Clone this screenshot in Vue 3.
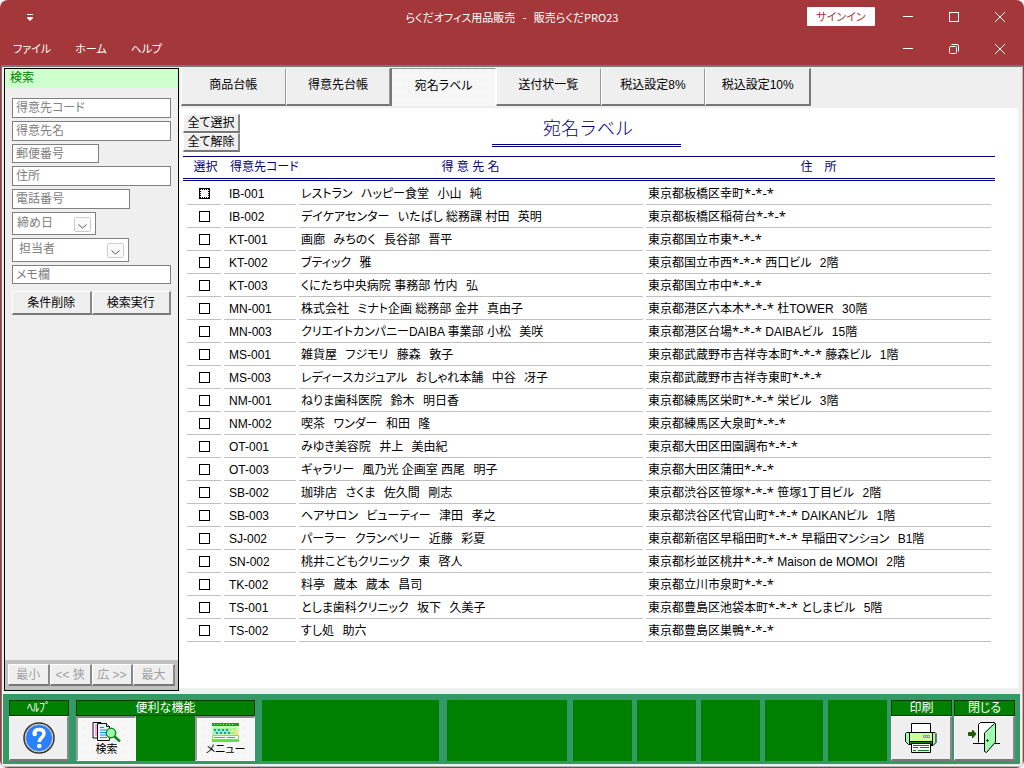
<script setup>
import { reactive, ref } from 'vue'

const menus = ['ファイル', 'ホーム', 'ヘルプ']
const tabs = ['商品台帳', '得意先台帳', '宛名ラベル', '送付状一覧', '税込設定8%', '税込設定10%']
const activeTab = ref(2)

const fields = [
  { label: '得意先コード', type: 'text', size: 'full' },
  { label: '得意先名', type: 'text', size: 'full' },
  { label: '郵便番号', type: 'text', size: 'short' },
  { label: '住所', type: 'text', size: 'full' },
  { label: '電話番号', type: 'text', size: 'medium' },
  { label: '締め日', type: 'select', size: 'day' },
  { label: '担当者', type: 'select', size: 'staff' },
  { label: 'メモ欄', type: 'text', size: 'note' },
]

const widths = ['最小', '<< 狭', '広 >>', '最大']

const customers = reactive([
  ['IB-001', 'レストラン　ハッピー食堂　小山　純', '東京都板橋区幸町', ''],
  ['IB-002', 'デイケアセンター　いたばし 総務課 村田　英明', '東京都板橋区稲荷台', ''],
  ['KT-001', '画廊　みちのく　長谷部　晋平', '東京都国立市東', ''],
  ['KT-002', 'ブティック　雅', '東京都国立市西', '西口ビル　2階'],
  ['KT-003', 'くにたち中央病院 事務部 竹内　弘', '東京都国立市中', ''],
  ['MN-001', '株式会社　ミナト企画 総務部 金井　真由子', '東京都港区六本木', '杜TOWER　30階'],
  ['MN-003', 'クリエイトカンパニーDAIBA 事業部 小松　美咲', '東京都港区台場', 'DAIBAビル　15階'],
  ['MS-001', '雑貨屋　フジモリ　藤森　敦子', '東京都武蔵野市吉祥寺本町', '藤森ビル　1階'],
  ['MS-003', 'レディースカジュアル　おしゃれ本舗　中谷　冴子', '東京都武蔵野市吉祥寺東町', ''],
  ['NM-001', 'ねりま歯科医院　鈴木　明日香', '東京都練馬区栄町', '栄ビル　3階'],
  ['NM-002', '喫茶　ワンダー　和田　隆', '東京都練馬区大泉町', ''],
  ['OT-001', 'みゆき美容院　井上　美由紀', '東京都大田区田園調布', ''],
  ['OT-003', 'ギャラリー　風乃光 企画室 西尾　明子', '東京都大田区蒲田', ''],
  ['SB-002', '珈琲店　さくま　佐久間　剛志', '東京都渋谷区笹塚', '笹塚1丁目ビル　2階'],
  ['SB-003', 'ヘアサロン　ビューティー　津田　孝之', '東京都渋谷区代官山町', 'DAIKANビル　1階'],
  ['SJ-002', 'パーラー　クランベリー　近藤　彩夏', '東京都新宿区早稲田町', '早稲田マンション　B1階'],
  ['SN-002', '桃井こどもクリニック　東　啓人', '東京都杉並区桃井', 'Maison de MOMOI　2階'],
  ['TK-002', '料亭　蔵本　蔵本　昌司', '東京都立川市泉町', ''],
  ['TS-001', 'としま歯科クリニック　坂下　久美子', '東京都豊島区池袋本町', 'としまビル　5階'],
  ['TS-002', 'すし処　助六', '東京都豊島区巣鴨', ''],
].map(([code, name, area, building]) => ({ code, name, area, building, checked: false })))

// Wide separators are set as an en space plus a thin space.
const spaced = (text) => text.replace(/　/g, '\u2002\u2009')
const setAll = (value) => customers.forEach((c) => { c.checked = value })
</script>

<template>
  <div class="window">
    <header class="titlebar">
      <button class="quick" aria-label="クイックアクセス">
        <svg width="6" height="7" viewBox="0 0 6 7"><path d="M0 .5h6M0 3.5h6L3 6.500z" fill="#fff" stroke="#fff" stroke-width="1" /></svg>
      </button>
      <h1 class="caption">らくだオフィス用品販売&nbsp;&nbsp; - &nbsp;&nbsp;販売らくだPRO23</h1>
      <button class="signin">サインイン</button>
      <div class="winbuttons">
        <button aria-label="最小化"><svg width="12" height="12"><path d="M1 5.500h10" /></svg></button>
        <button aria-label="最大化"><svg width="12" height="12"><rect x="1.500" y="1.500" width="9" height="9" /></svg></button>
        <button aria-label="終了"><svg width="12" height="12"><path d="M1 1l10 10M11 1L1 11" /></svg></button>
      </div>
    </header>
    <nav class="menubar">
      <button v-for="m in menus" :key="m" class="menu">{{ m }}</button>
      <div class="winbuttons">
        <button aria-label="子ウィンドウを最小化"><svg width="12" height="12"><path d="M1 5.500h10" /></svg></button>
        <button aria-label="元に戻す"><svg width="12" height="12"><rect x="1.500" y="3.500" width="7" height="7" rx="1" /><path d="M3.500 1.500h5.500q1.500 0 1.500 1.500v5.500" /></svg></button>
        <button aria-label="子ウィンドウを閉じる"><svg width="12" height="12"><path d="M1 1l10 10M11 1L1 11" /></svg></button>
      </div>
    </nav>

    <div class="client">
      <div class="work">
        <aside class="search">
          <h2>検索</h2>
          <form class="criteria" @submit.prevent>
            <template v-for="f in fields" :key="f.label">
              <input v-if="f.type === 'text'" type="text" :class="f.size" :placeholder="f.label" :aria-label="f.label">
              <div v-else class="combo" :class="f.size">
                <select :aria-label="f.label"><option>{{ f.label }}</option></select>
                <svg width="17" height="15"><rect x=".5" y=".5" width="16" height="14" rx="1" /><path d="M4.500 7.500l4 3.500 4-3.500" /></svg>
              </div>
            </template>
            <div class="actions">
              <button type="reset" class="raised">条件削除</button>
              <button type="submit" class="raised">検索実行</button>
            </div>
          </form>
          <div class="sizes">
            <button v-for="w in widths" :key="w" class="raised" disabled>{{ w }}</button>
          </div>
        </aside>

        <main class="main">
          <div class="tabs" role="tablist">
            <button v-for="(t, i) in tabs" :key="t" role="tab" :class="['tab', { active: i === activeTab }]" :aria-selected="i === activeTab" @click="activeTab = i">{{ t }}</button>
          </div>
          <section class="sheet">
            <div class="sheethead">
              <div class="bulk">
                <button class="raised" @click="setAll(true)">全て選択</button>
                <button class="raised" @click="setAll(false)">全て解除</button>
              </div>
              <h2>宛名ラベル</h2>
            </div>
            <table>
              <colgroup><col class="c1"><col class="c2"><col class="c3"><col class="c4"></colgroup>
              <thead>
                <tr><th>選択</th><th class="left">得意先コード</th><th>得 意 先 名</th><th>住　所</th></tr>
              </thead>
              <tbody>
                <tr v-for="(c, i) in customers" :key="c.code">
                  <td><div class="cell check"><input v-model="c.checked" type="checkbox" :class="{ current: i === 0 }" :aria-label="c.code"></div></td>
                  <td><div class="cell code">{{ c.code }}</div></td>
                  <td><div class="cell">{{ spaced(c.name) }}</div></td>
                  <td><div class="cell">{{ c.area }}<span class="mask">*-*-*</span>{{ c.building ? ' ' + spaced(c.building) : '' }}</div></td>
                </tr>
              </tbody>
            </table>
          </section>
        </main>
      </div>

      <footer class="toolbar">
        <div class="group help">
          <h3>ﾍﾙﾌﾟ</h3>
          <button class="raised tool" aria-label="ヘルプ">
            <svg width="34" height="34" viewBox="0 0 34 34">
              <circle cx="17" cy="17" r="15" fill="#fff" stroke="#333" stroke-width="1.500" />
              <circle cx="17" cy="17" r="13.500" fill="#2a80ff" stroke="#bbb" stroke-width="1" />
              <path d="M12 12.500C12.500 9.500 14.500 8.500 17 8.500c3.200 0 5 1.600 5 4.200 0 3.800-4.800 4-4.800 8.300" fill="none" stroke="#fff" stroke-width="3.500" />
              <circle cx="12.700" cy="13" r="2.300" fill="#fff" /><circle cx="17.300" cy="25" r="2.300" fill="#fff" />
            </svg>
          </button>
        </div>
        <div class="group handy">
          <h3>便利な機能</h3>
          <div class="pair">
            <button class="pressed tool">
              <svg width="29" height="20" viewBox="0 0 29 20">
                <path d="M1 .5h8l2 2.500v13H1z" fill="#fbeaff" stroke="#111" />
                <path d="M3 3h5M3 5h5M3 7h5M3 9h5M3 11h5M3 13h5" stroke="#f6c" />
                <path d="M5.500 1.500h9l3 3v14h-12z" fill="#e8f4ff" stroke="#111" />
                <path d="M14.500 1.500v3h3" fill="#fff" stroke="#111" />
                <path d="M8 5.500h4M8 8h7M8 10.500h6M8 13h7M8 15.500h7" stroke="#158bff" />
                <circle cx="19" cy="11" r="4.700" fill="#9dffa7" stroke="#168524" stroke-width="1.500" />
                <path d="M22.500 14.500l5.500 5" stroke="#168524" stroke-width="2.500" />
              </svg>
              <span>検索</span>
            </button>
            <button class="pressed tool">
              <svg width="29" height="20" viewBox="0 0 29 20">
                <path d="M1 1h27v17H1z" fill="#c8ffb0" /><path d="M1 1h27v3H1z" fill="#14a414" />
                <path d="M3 2.500h1m2 0h1m2 0h1m2 0h1m2 0h1m2 0h1m2 0h1" stroke="#7cff5a" />
                <path d="M2 6h23v6H2z" fill="#9df59a" /><path d="M3 7h2v2H3zM7 7h2v2H7zM11 7h2v2h-2zM15 7h2v2h-2zM5 10h2v2H5zM9 10h2v2H9zM13 10h2v2h-2zM17 10h2v2h-2z" fill="#178ed6" />
                <path d="M20 7h3v3h-3zM24 8h3v5h-3z" fill="#ffe08b" />
                <path d="M1.500 13.500h26v4h-26z" fill="#f5fff0" stroke="#72e34b" /><path d="M3 15.500h11M16 15.500h8" stroke="#5a8dff" />
                <path d="M1 19h27" stroke="#5be43b" stroke-width="2" />
              </svg>
              <span>メニュー</span>
            </button>
          </div>
        </div>
        <div class="slots">
          <div class="slot wide" /><div class="slot mid" />
          <div class="slot" /><div class="slot" /><div class="slot" /><div class="slot" /><div class="slot" />
        </div>
        <div class="group print">
          <h3>印刷</h3>
          <button class="raised tool" aria-label="印刷">
            <svg width="32" height="30" viewBox="0 0 32 30">
              <path d="M6.500.5h19v10h-19z" fill="#fff" stroke="#000" />
              <path d="M1.500 9.500h4v12h-2l-3-3v-8zM27 9.500h3l1 1v9l-3 3h-2v-13z" fill="#9dffae" stroke="#000" />
              <path d="M4.500 9.500h23v9h-23z" fill="#ccff9d" stroke="#000" />
              <path d="M4.500 18.500h23v3h-23z" fill="#188316" stroke="#000" />
              <path d="M18.500 12.500h6v2h-6zM20.500 12.500v2M22.500 12.500v2" fill="#ddd" stroke="#999" />
              <path d="M6.500 20.500h19v9h-19z" fill="#fff" stroke="#000" />
              <path d="M8 22.500h16M8 24.500h5M15 24.500h9M8 27.500h3M13 27.500h11" stroke="#008523" />
            </svg>
          </button>
        </div>
        <div class="group close">
          <h3>閉じる</h3>
          <button class="raised tool" aria-label="閉じる">
            <svg width="34" height="32" viewBox="0 0 34 32">
              <path d="M1.500 10.500h4v-2.500l3.500 4-3.500 4v-2.500h-4z" fill="#235c00" stroke="#235c00" />
              <path d="M12 21V3l2-2h13v20z" fill="#fff" />
              <path d="M11.500 20.500v-18l2-2h14l1 1M6 21.500h11M28 21.500h5" fill="none" stroke="#000" />
              <path d="M17.500 11l10-9.500 1 .5v18l-9 10.500-2-1z" fill="#9dffae" stroke="#000" />
              <path d="M19 18.500h3M20.500 17v3" stroke="#235c00" />
            </svg>
          </button>
        </div>
      </footer>
    </div>
  </div>
</template>

<style>
html, body { margin: 0; background: #f3f3f3; }
</style>

<style scoped>
* { box-sizing: border-box; }
.window {
  min-height: 100vh;
  display: flex;
  flex-direction: column;
  overflow: hidden;
  padding: 0 1px 1px;
  border-radius: 8px;
  background: #a4373a;
  color: #000;
  font: 12px/16px "Liberation Sans", "Noto Sans CJK JP", sans-serif;
  font-feature-settings: "palt";
}
button, input, select { font: inherit; font-feature-settings: inherit; color: inherit; }
button { padding: 0; border: 0; background: none; white-space: nowrap; }
h1, h2, h3 { margin: 0; font-size: inherit; font-weight: 400; }

.titlebar { position: relative; display: flex; align-items: center; height: 33px; color: #fff; }
.quick { display: flex; margin-left: 26px; padding: 2px 0 0; }
.caption { position: absolute; left: 0; right: 0; text-align: center; font-family: "Noto Sans CJK JP", sans-serif; font-size: 11px; pointer-events: none; }
.signin { margin-left: auto; width: 68px; height: 19px; border-radius: 1px; background: #fff; color: #a4373a; font-size: 11px; }
.winbuttons { display: flex; gap: 34px; margin: 0 17px 0 27px; }
.winbuttons button { display: flex; }
.winbuttons svg { fill: none; stroke: #fff; stroke-width: 1; }
.menubar { display: flex; align-items: center; gap: 24px; height: 32px; padding-left: 12px; color: #fff; font-size: 11px; }
.menubar .winbuttons { margin-left: auto; }

.client {
  flex: 1;
  display: flex;
  flex-direction: column;
  padding: 0 2px 2px;
  border: solid;
  border-width: 2px 1px 1px;
  border-color: #777 #bbb #bbb #777;
  background: #efefef;
}
.work { flex: 1; display: flex; }

.search { display: flex; flex-direction: column; width: 175px; margin: 1px 0 3px; border: 1px solid #000; }
.search h2 { height: 19px; padding-left: 5px; line-height: 18px; background: #cfc; color: #008000; }
.criteria { flex: 1; display: flex; flex-direction: column; gap: 3px; padding: 10px 7px; }
.criteria input { height: 20px; padding: 0 3px; border: 1px solid #808080; border-radius: 0; background: #fff; }
.criteria input::placeholder { color: #808080; opacity: 1; }
.criteria .short, .criteria .note { height: 19px; }
.full, .note { width: 100%; }
.short { width: 87px; }
.medium { width: 118px; }
.combo { position: relative; border: 1px solid #808080; background: #fff; }
.day { width: 84px; height: 23px; }
.staff { width: 117px; height: 24px; }
.combo select { width: 100%; height: 100%; padding: 0 4px 1px; border: 0; background: none; color: #808080; appearance: none; }
.combo.staff select { padding-left: 6px; padding-bottom: 2px; }
.combo svg { position: absolute; right: 4px; top: 4px; fill: none; stroke: #555; pointer-events: none; }
.combo rect { fill: #fafafa; stroke: #ccc; }
.actions { display: flex; margin-top: 4px; }
.actions button { flex: 1; height: 24px; }
.raised { border: solid; border-width: 1px 2px 2px 1px; border-color: #fff #888 #777 #fff; background: #efefef; }
.sizes { display: flex; padding: 4px 3px; background: #c0c0c0; }
.sizes button { flex: 1; height: 22px; color: #a0a0a0; }

.main { flex: 1; min-width: 0; display: flex; flex-direction: column; }
.tabs { display: flex; max-width: 632px; padding: 1px 0 2px 2px; }
.tab { flex: 1; height: 38px; padding-bottom: 4px; border: solid; border-width: 1px 1px 2px; border-color: #efefef #999 #777 #fff; background: #efefef; }
.tab:last-child { border-right: 2px solid #777; }
.tab.active { padding: 0 0 3px; border-width: 1px 1px 0 2px; border-color: #999 #fff #fff #777; background: repeating-conic-gradient(#fff 0 25%, #efefef 0 50%) 0 0 / 2px 2px; }

.sheet { flex: 1; margin: 0 2px 6px 0; padding: 6px 23px 0 4px; background: #fff; }
.sheethead { position: relative; height: 42px; margin-right: 6px; }
.bulk { display: flex; flex-direction: column; width: 57px; }
.bulk button { height: 19px; line-height: 16px; }
.sheethead h2 {
  position: absolute;
  left: 0;
  right: 0;
  top: 0;
  width: 189px;
  height: 33px;
  margin: 0 auto;
  padding-left: 4px;
  border-bottom: 3px double #000080;
  color: #000080;
  font: 300 18px/26px "Noto Sans CJK JP", sans-serif;
  text-align: center;
}
table { width: 100%; table-layout: fixed; border-collapse: separate; border-spacing: 0; }
.c1 { width: 41px; }
.c2 { width: 75px; }
.c3 { width: 347px; }
th { height: 25px; padding: 0 4px 2px 0; border-top: 1px solid #000080; border-bottom: 3px double #000080; color: #000080; font-weight: 400; line-height: 16px; white-space: nowrap; }
th:first-child { padding: 0 0 2px 4px; }
th.left { padding-left: 6px; text-align: left; }
td { padding: 0 3px 0 0; }
td:first-child { padding-left: 4px; }
td:last-child { padding-right: 4px; }
tbody tr:first-child td { padding-top: 1px; }
.cell { height: 23px; padding: 3px 0 0 2px; border-bottom: 1px solid #c0c0c0; line-height: 18px; white-space: nowrap; overflow: hidden; }
.code { padding-left: 5px; }
.check { display: flex; justify-content: center; padding: 6px 0 0; }
.check input { width: 11px; height: 11px; margin: 0; border: 1px solid #000; border-radius: 0; background: #fff; appearance: none; }
.check input.current { outline: 1px dotted #000; outline-offset: -2px; }
.check input:checked { background: linear-gradient(#000, #000) center / 5px 5px no-repeat #fff; }
.mask { font: 13px/16px "Noto Sans", sans-serif; }

.toolbar { display: flex; align-items: stretch; margin-left: -1px; padding: 6px 5px 3px 6px; background: #396; }
.group { display: flex; flex-direction: column; }
.group h3 { height: 16px; border: 1px solid #063c06; background: #008000; color: #fff; line-height: 14px; text-align: center; }
.tool { display: flex; flex-direction: column; align-items: center; justify-content: center; height: 45px; line-height: 14px; }
.help { width: 60px; margin-right: 7px; }
.handy { width: 179px; margin-right: 7px; }
.pair { display: flex; justify-content: space-between; background: #008000; }
.pressed { width: 60px; border: solid; border-width: 2px 1px 1px 2px; border-color: #888 #fff #fff #999; background: repeating-conic-gradient(#fff 0 25%, #efefef 0 50%) 0 0 / 2px 2px; }
.pressed span { font-size: 11px; }
.slots { flex: 1; display: flex; gap: 5px; margin-right: 4px; }
.slot { flex: 59 1 0; background: #008000; }
.wide { flex-grow: 178; margin-right: 3px; }
.mid { flex-grow: 121; margin-right: 1px; }
.print { width: 61px; margin-right: 2px; }
.close { width: 61px; }
</style>
